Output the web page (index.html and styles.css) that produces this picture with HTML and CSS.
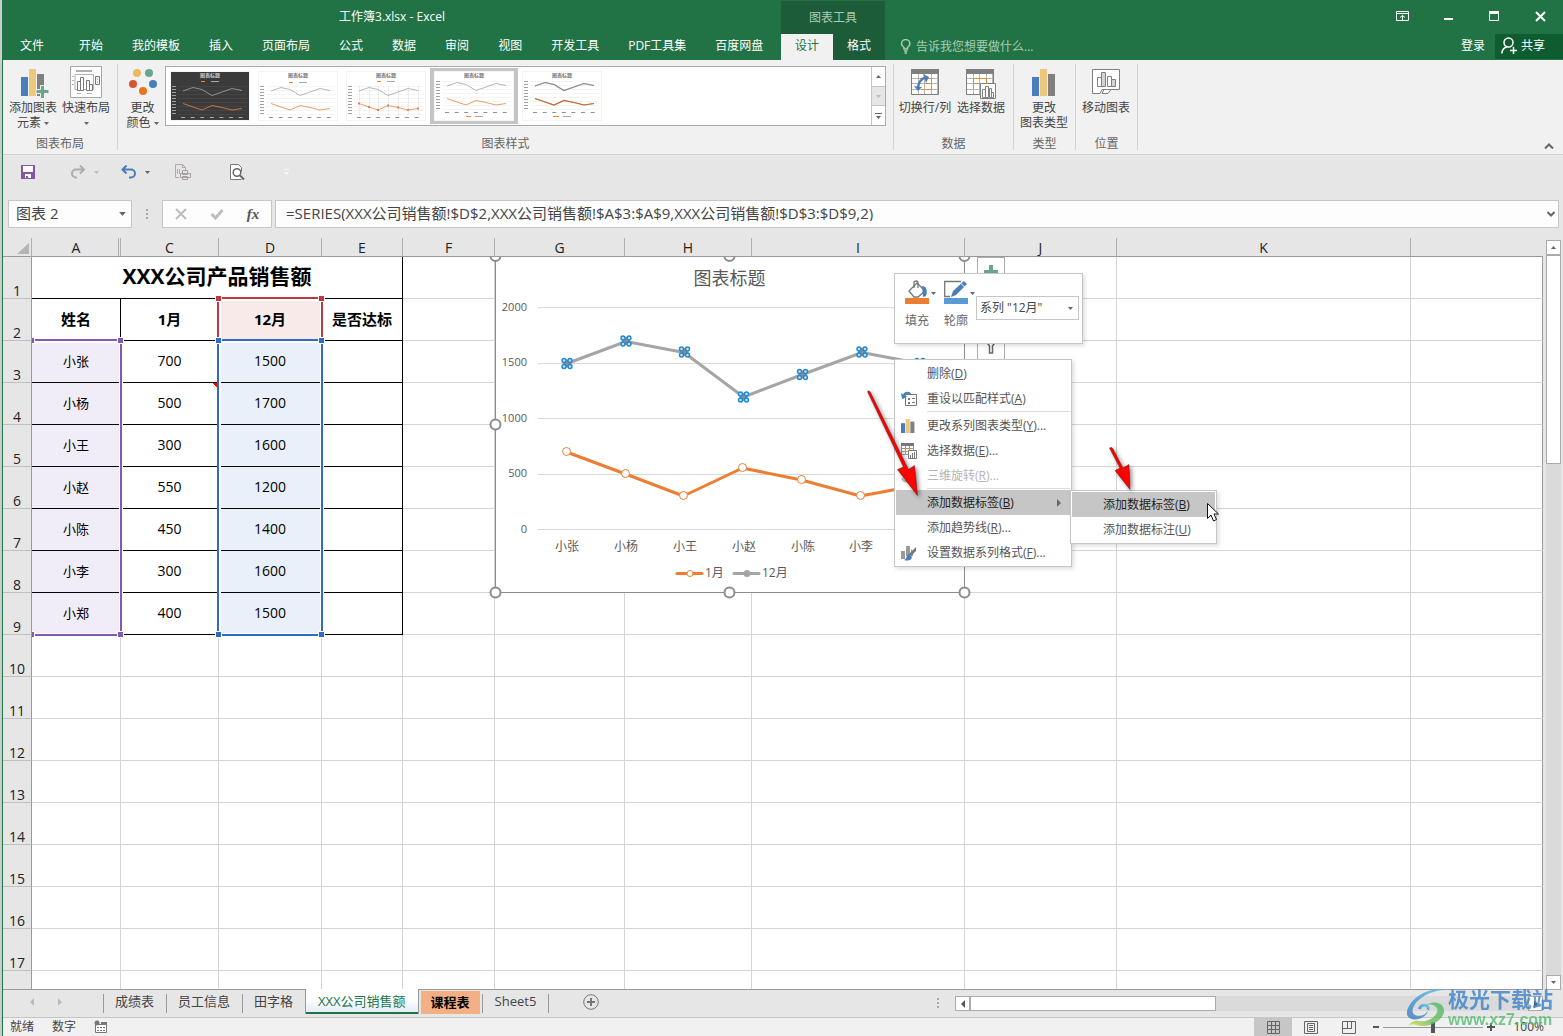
FILE: index.html
```html
<!DOCTYPE html>
<html lang="zh-CN">
<head>
<meta charset="utf-8">
<title>工作簿3.xlsx - Excel</title>
<meta name="viewport" content="width=device-width, initial-scale=1">
<link rel="stylesheet" href="styles.css">
</head>
<body>
<svg class="defs" aria-hidden="true">
  <defs>
    <symbol id="caret" viewBox="0 0 5 3"><path d="M0 0h5L2.500 3z" fill="currentColor"/></symbol>
    <symbol id="bars" viewBox="0 0 24 27"><path fill="#4a7ebb" d="M0 8h7v19H0z"/><path fill="#eec77e" d="M8 0h7v27H8z"/><path fill="#808080" d="M16 5h7v22h-7z"/></symbol>
    <symbol id="grid-table" viewBox="0 0 30 28"><path fill="#fff" stroke="#b5b5b5" d="M1.500 1.500h26v24h-26zM8.500 4v22M14.500 4v22M21.500 4v22M2 9.500h26M2 14.500h26M2 20.500h26"/><path fill="none" stroke="#7f7f7f" d="M1.500 4v21.500h27V4"/><path fill="#7f7f7f" d="M1 0h28v5H1z"/></symbol>
    <symbol id="plot" viewBox="0 0 78 48">
      <path fill="none" stroke="currentColor" stroke-opacity=".15" stroke-width=".5" d="M7 14.500h69M7 18.500h69M7 22.500h69M7 26.500h69M7 30.500h69M7 34.500h69M7 38.500h69M7 42.500h69"/>
      <path fill="none" stroke="currentColor" stroke-opacity=".7" stroke-dasharray="1 2" stroke-width="4" d="M3 14v29"/>
      <path fill="none" stroke="currentColor" stroke-opacity=".8" stroke-dasharray="4 5.600" stroke-width="1" d="M10 45.500h64"/>
      <path fill="none" stroke="#a5a5a5" stroke-width=".8" d="M12 19l10-3.500 9 2L41 23.500l10-3.500 10-3.500 10 2"/>
      <path fill="none" stroke="#e8853c" stroke-width=".8" d="M12 31.500l10 3.500 9 3 10-4.500 10 2 10 2.500 10-1.500"/>
    </symbol>
  </defs>
</svg>

<div class="window">
  <header class="titlebar">
    <div class="title-main">
      <h1 class="doc-title">工作簿3.xlsx - Excel</h1>
      <nav class="tabs" aria-label="功能区">
        <button class="tab tab-file">文件</button><button class="tab">开始</button><button class="tab">我的模板</button><button class="tab">插入</button><button class="tab">页面布局</button><button class="tab">公式</button><button class="tab">数据</button><button class="tab">审阅</button><button class="tab">视图</button><button class="tab">开发工具</button><button class="tab">PDF工具集</button><button class="tab">百度网盘</button>
      </nav>
    </div>
    <div class="context-tools">
      <div class="context-title">图表工具</div>
      <div class="context-tabs"><button class="ctab active">设计</button><button class="ctab">格式</button></div>
    </div>
    <div class="title-side">
      <div class="window-controls">
        <button aria-label="功能区显示选项"><svg width="13" height="11"><path fill="none" stroke="#fff" d="M.5.5h12v9H.5zM0 2.500h13M6.500 9V4.500M4 6.500l2.500-2 2.500 2"/></svg></button>
        <button aria-label="最小化"><svg width="11" height="11"><path fill="#fff" d="M1 7h9v2H1z"/></svg></button>
        <button aria-label="最大化"><svg width="11" height="11"><path fill="none" stroke="#fff" d="M.5.5h9v9h-9z"/><path fill="#fff" d="M0 0h10v3H0z"/></svg></button>
        <button aria-label="关闭"><svg width="11" height="11"><path stroke="#fff" stroke-width="2" d="M1 1l9 9M10 1l-9 9"/></svg></button>
      </div>
      <div class="account-row">
        <button class="tell-me"><svg width="12" height="15"><path fill="none" stroke="#a8cdb5" stroke-width="1.500" d="M4 10V8.500C2.500 7.500 1.500 6.500 1.500 4.800a4.200 4.200 0 018.400 0C9.900 6.500 9 7.500 7.500 8.500V10zM4 12h3.500M4.500 14h2.500"/></svg>告诉我您想要做什么...</button>
        <button class="login">登录</button>
        <button class="share"><svg width="16" height="17"><circle cx="7.500" cy="5.500" r="4.500" fill="none" stroke="#fff" stroke-width="1.500"/><path fill="none" stroke="#fff" stroke-width="1.500" d="M.8 16.500c.4-4 2.500-6 5.200-6.500M9 13.500h7M12.500 10v7"/></svg>共享</button>
      </div>
    </div>
  </header>

  <section class="ribbon" aria-label="设计">
    <div class="group group-layout">
      <div class="group-body">
        <button class="big"><svg width="24" height="30"><use href="#bars" width="24" height="27"/><path fill="#6ba58f" stroke="#f1f1f1" d="M19.500 16.500h4v4h4.500v4h-4.500v5h-4v-5H15v-4h4.500z"/></svg><span>添加图表</span><span>元素 <svg class="caret"><use href="#caret"/></svg></span></button>
        <button class="big"><svg class="tall" width="32" height="32"><path fill="#fff" stroke="#a6a6a6" d="M.5.5h31v31H.5z"/><path fill="#b0b0b0" d="M6 4h16v2H6z"/><path fill="none" stroke="#b0b0b0" d="M5 8.500h18.500v15H5zM2 10.500h2M2 14.500h2M2 18.500h2M7 27.500h4M17 27.500h5"/><path fill="#fff" stroke="#777" d="M7.500 15.500h3v9h-3zM10.500 11.500h3v13h-3zM16.500 14.500h3v10h-3zM19.500 18.500h3v6h-3zM25.500 10.500h4v8h-4zM27 13h1M27 16h1"/></svg><span>快速布局</span><span><svg class="caret"><use href="#caret"/></svg></span></button>
      </div>
      <div class="group-label">图表布局</div>
    </div>
    <div class="group group-styles">
      <div class="group-body">
        <button class="big"><svg width="28" height="28"><circle cx="8" cy="4" r="4" fill="#ecb864"/><circle cx="20" cy="4" r="4" fill="#6ba58f"/><circle cx="4" cy="15" r="4" fill="#d65532"/><circle cx="24" cy="15" r="4" fill="#4a7ebb"/><circle cx="14" cy="22" r="4" fill="#e5761c"/></svg><span>更改</span><span>颜色 <svg class="caret"><use href="#caret"/></svg></span></button>
        <div class="gallery">
          <button class="thumb" aria-label="样式 1"><svg class="dark" viewBox="0 0 78 48"><path fill="#3b3b3b" d="M0 0h78v48H0z"/><text x="39" y="5">图表标题</text><path stroke="#e8853c" d="M30 9.500h4"/><path stroke="#aaa" d="M40 9.500h8"/><use href="#plot"/></svg></button>
          <button class="thumb" aria-label="样式 2"><svg class="pale" viewBox="0 0 78 48"><text x="39" y="5">图表标题</text><path stroke="#e8853c" d="M30 10.500h4"/><path stroke="#aaa" d="M40 10.500h8"/><use href="#plot"/></svg></button>
          <button class="thumb" aria-label="样式 3"><svg class="pale" viewBox="0 0 78 48"><text x="39" y="5">图表标题</text><path stroke="#e8853c" d="M30 9.500h4"/><path stroke="#aaa" d="M40 9.500h8"/><path stroke="#eee" d="M12.500 14v29M22.500 14v29M31.500 14v29M41.500 14v29M51.500 14v29M61.500 14v29M71.500 14v29"/><use href="#plot"/><path fill="#e8853c" d="M11 30.500h2v2h-2zM21 34h2v2h-2zM30 37h2v2h-2zM40 32.500h2v2h-2zM50 34.500h2v2h-2zM60 37h2v2h-2zM70 35.500h2v2h-2z"/></svg></button>
          <button class="thumb selected" aria-label="样式 4"><svg class="pale" viewBox="0 0 78 48"><text x="39" y="5">图表标题</text><use href="#plot" y="-5"/><path stroke="#e8853c" d="M31 44.500h5"/><path stroke="#aaa" d="M40 44.500h8"/></svg></button>
          <button class="thumb" aria-label="样式 5"><svg class="pale" viewBox="0 0 78 48"><text x="39" y="5">图表标题</text><use href="#plot" y="-5"/><path fill="none" stroke="#8a8a8a" stroke-width="1.200" d="M12 14l10-3.500 9 2L41 18.500l10-3.500 10-3.500 10 2"/><path fill="none" stroke="#c06a35" stroke-width="1.200" d="M12 26.500l10 3.500 9 3 10-4.500 10 2 10 2.500 10-1.500"/><path stroke="#e8853c" d="M30 44.500h6"/><path stroke="#aaa" d="M40 44.500h8"/></svg></button>
          <div class="gallery-scroll">
            <button aria-label="上一行"><svg class="caret flip"><use href="#caret"/></svg></button>
            <button aria-label="下一行" disabled><svg class="caret"><use href="#caret"/></svg></button>
            <button aria-label="其他"><svg width="7" height="6"><path fill="#666" d="M0 0h7v1H0zM1 3h5L3.500 6z"/></svg></button>
          </div>
        </div>
      </div>
      <div class="group-label">图表样式</div>
    </div>
    <div class="group group-data">
      <div class="group-body">
        <button class="big"><svg width="30" height="28"><use href="#grid-table" width="30" height="28"/><path fill="none" stroke="#e8853c" d="M8.500 9.500h13v11H12M14.500 14.500h7"/><path fill="none" stroke="#4a7ebb" stroke-width="2.500" d="M8 20c0-7 4-11 9-12"/><path fill="#4a7ebb" d="M13 5l6 3-3 6zM4 17l4 5 4-4z"/></svg><span>切换行/列</span></button>
        <button class="big"><svg width="32" height="30"><use href="#grid-table" width="30" height="28"/><path fill="none" stroke="#e8853c" d="M8.500 20V9.500h13V14M8.500 14.500h6"/><path fill="#fff" stroke="#7f7f7f" d="M15.500 14.500h15v15h-15zM17.500 20.500h3v8h-3zM20.500 17.500h3v11h-3zM24.500 19.500h2v9h-2zM26.500 23.500h2v5h-2z"/></svg><span>选择数据</span></button>
      </div>
      <div class="group-label">数据</div>
    </div>
    <div class="group group-type">
      <div class="group-body">
        <button class="big"><svg width="24" height="27"><use href="#bars" width="24" height="27"/></svg><span>更改</span><span>图表类型</span></button>
      </div>
      <div class="group-label">类型</div>
    </div>
    <div class="group group-place">
      <div class="group-body">
        <button class="big"><svg width="29" height="27"><path fill="#fff" stroke="#7f7f7f" d="M.5.5h27v20H10l-2 4H.5zM10 24.500l2-4h7l-3 4z"/><path fill="#fff" stroke="#7f7f7f" d="M5.500 8.500h4v9h-4zM15.500 7.500h4v10h-4z"/><path fill="#d4d4d4" stroke="#7f7f7f" d="M9.500 3.500h4v14h-4zM19.500 10.500h4v7h-4z"/></svg><span>移动图表</span></button>
      </div>
      <div class="group-label">位置</div>
    </div>
    <button class="collapse" aria-label="折叠功能区"><svg width="10" height="6"><path fill="none" stroke="#666" stroke-width="2" d="M1 5.500l4-4 4 4"/></svg></button>
  </section>

  <div class="qat">
    <button aria-label="保存"><svg width="14" height="14"><path fill="#8655ab" d="M0 0h14v14H0z"/><path fill="#fff" d="M2 1h10v6H2zM4 9h6v4H4z"/><path fill="#8655ab" d="M5 11h2v2H5z"/></svg></button>
    <button class="q-redo" aria-label="恢复"><svg width="16" height="14"><path fill="none" stroke="#adadad" stroke-width="2" d="M13 4.500H6A4 4 0 006 12.500h1M10 .5l4 4-4 4"/></svg><svg class="caret faint"><use href="#caret"/></svg></button>
    <button class="q-undo" aria-label="撤消"><svg width="16" height="14"><path fill="none" stroke="#4a7ebb" stroke-width="2" d="M2 4.500h8a4 4 0 010 8H8M5.500.5l-4 4 4 4"/></svg><svg class="caret"><use href="#caret"/></svg></button>
    <button class="q-print" aria-label="快速打印"><svg width="17" height="17"><path fill="none" stroke="#b0a8ad" d="M4 13.500H.5V.5h7l3 3V6M7.500.5v3h3M2.500 5v5M4.500 5v5"/><path fill="#e6e6e6" stroke="#a6a0a4" d="M7.500 6.500h5v4h-5zM5.500 9.500h10v4h-10zM7.500 12.500h5v3h-5z"/></svg></button>
    <button class="q-find" aria-label="打印预览"><svg width="16" height="17"><path fill="#fff" stroke="#777" d="M11.500 15.500H.5V.5h8l3 3v4"/><circle cx="7" cy="8.500" r="3.800" fill="#fff" stroke="#666" stroke-width="1.500"/><path stroke="#666" stroke-width="2" d="M10 11.500l4 4"/></svg></button>
    <button class="q-more" aria-label="自定义快速访问工具栏"><svg width="5" height="6"><path fill="#f8f8f8" d="M0 0h5v1H0zM0 3h5L2.500 6z"/></svg></button>
  </div>

  <div class="formula-bar">
    <div class="name-box"><input aria-label="名称框" value="图表 2"><button aria-label="名称列表"><svg width="7" height="4"><use href="#caret"/></svg></button></div>
    <span class="dots"></span>
    <div class="fx-tools">
      <button aria-label="取消"><svg width="12" height="12"><path stroke="#bdbdbd" stroke-width="2" d="M1 1l10 10M11 1L1 11"/></svg></button>
      <button aria-label="输入"><svg width="14" height="12"><path fill="none" stroke="#bdbdbd" stroke-width="3" d="M1.500 6l4 4L12.500 2"/></svg></button>
      <button class="fx">fx</button>
    </div>
    <div class="formula"><input aria-label="编辑栏" value="=SERIES(XXX公司销售额!$D$2,XXX公司销售额!$A$3:$A$9,XXX公司销售额!$D$3:$D$9,2)"><button aria-label="展开编辑栏"><svg width="8" height="6"><path fill="none" stroke="#666" stroke-width="2" d="M.5 1l3.500 3.500L7.500 1"/></svg></button></div>
  </div>

  <main class="sheet-area">
    <div class="sheet">
      <table class="cells">
        <colgroup><col class="c-head"><col class="c-a"><col class="c-c"><col class="c-d"><col class="c-e"><col class="c-f"><col class="c-g"><col class="c-h"><col class="c-i"><col class="c-j"><col class="c-k"><col></colgroup>
        <thead><tr><th class="corner"><svg width="12" height="11"><path fill="#b4b4b4" d="M12 0v11H0z"/></svg></th><th class="before-hidden">A</th><th>C</th><th>D</th><th>E</th><th>F</th><th>G</th><th>H</th><th>I</th><th>J</th><th>K</th><th></th></tr></thead>
        <tbody class="data">
          <tr><th>1</th><td class="caption" colspan="4">XXX公司产品销售额</td><td></td><td></td><td></td><td></td><td></td><td></td><td></td></tr>
          <tr class="names"><th>2</th><td>姓名</td><td>1月</td><td class="red">12月</td><td>是否达标</td><td></td><td></td><td></td><td></td><td></td><td></td><td></td></tr>
          <tr><th>3</th><td class="violet">小张</td><td>700</td><td class="blue">1500</td><td></td><td></td><td></td><td></td><td></td><td></td><td></td><td></td></tr>
          <tr><th>4</th><td class="violet">小杨</td><td class="noted">500</td><td class="blue">1700</td><td></td><td></td><td></td><td></td><td></td><td></td><td></td><td></td></tr>
          <tr><th>5</th><td class="violet">小王</td><td>300</td><td class="blue">1600</td><td></td><td></td><td></td><td></td><td></td><td></td><td></td><td></td></tr>
          <tr><th>6</th><td class="violet">小赵</td><td>550</td><td class="blue">1200</td><td></td><td></td><td></td><td></td><td></td><td></td><td></td><td></td></tr>
          <tr><th>7</th><td class="violet">小陈</td><td>450</td><td class="blue">1400</td><td></td><td></td><td></td><td></td><td></td><td></td><td></td><td></td></tr>
          <tr><th>8</th><td class="violet">小李</td><td>300</td><td class="blue">1600</td><td></td><td></td><td></td><td></td><td></td><td></td><td></td><td></td></tr>
          <tr><th>9</th><td class="violet">小郑</td><td>400</td><td class="blue">1500</td><td></td><td></td><td></td><td></td><td></td><td></td><td></td><td></td></tr>
        </tbody>
        <tbody>
          <tr><th>10</th><td></td><td></td><td></td><td></td><td></td><td></td><td></td><td></td><td></td><td></td><td></td></tr>
          <tr><th>11</th><td></td><td></td><td></td><td></td><td></td><td></td><td></td><td></td><td></td><td></td><td></td></tr>
          <tr><th>12</th><td></td><td></td><td></td><td></td><td></td><td></td><td></td><td></td><td></td><td></td><td></td></tr>
          <tr><th>13</th><td></td><td></td><td></td><td></td><td></td><td></td><td></td><td></td><td></td><td></td><td></td></tr>
          <tr><th>14</th><td></td><td></td><td></td><td></td><td></td><td></td><td></td><td></td><td></td><td></td><td></td></tr>
          <tr><th>15</th><td></td><td></td><td></td><td></td><td></td><td></td><td></td><td></td><td></td><td></td><td></td></tr>
          <tr><th>16</th><td></td><td></td><td></td><td></td><td></td><td></td><td></td><td></td><td></td><td></td><td></td></tr>
          <tr><th>17</th><td></td><td></td><td></td><td></td><td></td><td></td><td></td><td></td><td></td><td></td><td></td></tr>
          <tr><th></th><td></td><td></td><td></td><td></td><td></td><td></td><td></td><td></td><td></td><td></td><td></td></tr>
        </tbody>
      </table>

      <!-- coloured frames round the ranges the chart series refers to -->
      <svg class="ranges" viewBox="32 257 300 384" width="300" height="384" aria-hidden="true">
        <g fill="none" stroke="#fff" stroke-width="4"><path d="M121 341H32M121 341V635H32M219 341H322V635H219zM219 341V299H322V341"/></g>
        <g fill="none" stroke-width="2"><path stroke="#7f5bb5" d="M32 340H121V635H32"/><path stroke="#c0373f" d="M218 340V298H322V340"/><path stroke="#2f6bc6" d="M218 340H322V635H218z"/></g>
        <g stroke="#fff"><path fill="#7f5bb5" d="M117.500 337.500h6v6h-6zM117.500 631.500h6v6h-6zM28.500 337.500h6v6h-6zM28.500 631.500h6v6h-6z"/><path fill="#c0373f" d="M215.500 295.500h6v6h-6zM318.500 295.500h6v6h-6z"/><path fill="#2f6bc6" d="M215.500 337.500h6v6h-6zM318.500 337.500h6v6h-6zM215.500 631.500h6v6h-6zM318.500 631.500h6v6h-6z"/></g>
      </svg>

      <svg class="chart" viewBox="488 257 484 343" width="484" height="343" role="img" aria-label="图表标题">
        <path fill="#fff" stroke="#8c8c8c" d="M495.500 250.500h469v342h-469z"/>
        <text class="chart-title" x="729.500" y="285">图表标题</text>
        <path fill="none" stroke="#d9d9d9" d="M538 307.500h411M538 363.500h411M538 418.500h411M538 474.500h411M538 529.500h411"/>
        <g class="y-axis"><text x="527" y="311">2000</text><text x="527" y="366">1500</text><text x="527" y="422">1000</text><text x="527" y="477">500</text><text x="527" y="533">0</text></g>
        <g class="x-axis"><text x="567" y="551">小张</text><text x="626" y="551">小杨</text><text x="685" y="551">小王</text><text x="744" y="551">小赵</text><text x="803" y="551">小陈</text><text x="861" y="551">小李</text></g>
        <path fill="none" stroke="#a5a5a5" stroke-width="3" stroke-linejoin="round" d="M567 363.500L626 341.500 684 352.500 743.500 397 802.500 374.500 862 352.500 920 363.500"/>
        <path fill="none" stroke="#ed7d31" stroke-width="3" stroke-linejoin="round" d="M566.500 452L625.500 474 683.500 496 742.500 468 801.500 480 860.500 496 919.500 485"/>
        <g fill="#fff" stroke="#ed7d31"><circle cx="566.500" cy="451.500" r="4"/><circle cx="625.500" cy="473.500" r="4"/><circle cx="683.500" cy="495.500" r="4"/><circle cx="742.500" cy="467.500" r="4"/><circle cx="801.500" cy="479.500" r="4"/><circle cx="860.500" cy="495.500" r="4"/></g>
        <defs><g id="pt"><circle r="4" fill="#8c8c8c"/><g fill="#bfe0f7" stroke="#1c86d1" stroke-width="1.400"><circle cx="-3" cy="-3" r="2"/><circle cx="3" cy="-3" r="2"/><circle cx="-3" cy="3" r="2"/><circle cx="3" cy="3" r="2"/></g></g></defs>
        <use href="#pt" x="567" y="363.500"/><use href="#pt" x="626" y="341"/><use href="#pt" x="684.500" y="352"/><use href="#pt" x="743.500" y="397"/><use href="#pt" x="802.500" y="374.500"/><use href="#pt" x="862" y="352"/><use href="#pt" x="920" y="363.500"/>
        <path stroke="#ed7d31" stroke-width="3" stroke-linecap="round" d="M677 573.500h25"/><circle cx="690" cy="573.500" r="3" fill="#fff" stroke="#ed7d31"/><text x="705" y="577">1月</text>
        <path stroke="#a5a5a5" stroke-width="3" stroke-linecap="round" d="M734 573.500h25"/><circle cx="747" cy="573.500" r="3.500" fill="#a5a5a5"/><text x="762" y="577">12月</text>
        <g fill="#fff" stroke="#8c8c8c" stroke-width="2"><circle cx="495.500" cy="256" r="5"/><circle cx="729.500" cy="256" r="5"/><circle cx="964.500" cy="256" r="5"/><circle cx="495.500" cy="424.500" r="5"/><circle cx="495.500" cy="592.500" r="5"/><circle cx="729.500" cy="592.500" r="5"/><circle cx="964.500" cy="592.500" r="5"/></g>
      </svg>

      <div class="chart-side">
        <button aria-label="图表元素"><svg width="14" height="14"><path fill="#6ba58f" d="M5 0h4v5h5v4H9v5H5V9H0V5h5z"/></svg></button>
        <button aria-label="图表筛选器"><svg width="12" height="14"><path fill="#fff" stroke="#666" stroke-width="1.500" d="M1 1h10L7.500 6v7h-3V6z"/></svg></button>
      </div>

      <div class="mini-bar">
        <button class="mini"><svg width="27" height="26"><path fill="#fff" stroke="#777" stroke-width="1.300" d="M4 11l8-8 8 8-7 6H9z"/><path fill="none" stroke="#777" stroke-width="1.300" d="M9 8V2.500c0-2 4-2 4 0V8"/><path fill="#4a7ebb" d="M17 6c4 0 6 4 4 10l-3 1z"/><path fill="#ed7d31" d="M0 18h24v6H0z"/></svg><svg class="caret"><use href="#caret"/></svg><span>填充</span></button>
        <button class="mini"><svg width="27" height="26"><path fill="#fff" stroke="#777" stroke-width="1.300" d="M17 1.500H.7v15H6"/><path fill="#4a7ebb" d="M7 17l2-6L20 1l3 3-11 11z"/><path stroke="#fff" d="M17 3.500l3.500 3.500"/><path fill="#5b9bd5" d="M0 18h24v6H0z"/></svg><svg class="caret"><use href="#caret"/></svg><span>轮廓</span></button>
        <div class="series"><select aria-label="图表元素"><option>系列 "12月"</option></select><svg class="caret"><use href="#caret"/></svg></div>
      </div>

      <ul class="menu">
        <li><button><i></i>删除(<u>D</u>)</button></li>
        <li><button><i><svg width="16" height="16"><path fill="#fff" stroke="#777" d="M4.500 3.500h11v11h-11z"/><path stroke="#777" stroke-width="2" d="M7 8h2M7 12h2"/><path stroke="#777" d="M11 7.500h3M11 11.500h3"/><path fill="none" stroke="#4a7ebb" stroke-width="2" d="M3 7C2 2 6 .5 9.500 3"/><path fill="#4a7ebb" d="M0 2l1 6 5-2z"/></svg></i>重设以匹配样式(<u>A</u>)</button></li>
        <li class="sep"></li>
        <li><button><i><svg width="14" height="14" viewBox="0 0 24 27" preserveAspectRatio="none"><use href="#bars"/></svg></i>更改系列图表类型(<u>Y</u>)...</button></li>
        <li><button><i><svg width="16" height="16"><path fill="#fff" stroke="#999" d="M.5.5h12v11H.5zM4.500 3v9M8.500 3v9M1 5.500h12M1 8.500h12"/><path fill="#777" d="M0 0h13v3H0z"/><path fill="none" stroke="#e8853c" d="M4.500 9V5.500h5"/><path fill="#fff" stroke="#777" d="M7.500 7.500h8v8h-8z"/><path stroke="#777" d="M9.500 12v3M11.500 10v5M13.500 9v6"/></svg></i>选择数据(<u>E</u>)...</button></li>
        <li><button disabled><i><svg width="14" height="14"><path fill="none" stroke="#bbb" stroke-width="2" d="M1 5a6 6 0 0111 0M12 9A6 6 0 011 9M5 5h4v4H5z"/></svg></i>三维旋转(<u>R</u>)...</button></li>
        <li class="sep"></li>
        <li><button class="on"><i></i>添加数据标签(<u>B</u>)<svg class="sub-arrow" width="4" height="8"><path fill="#666" d="M0 0l4 4-4 4z"/></svg></button></li>
        <li><button><i></i>添加趋势线(<u>R</u>)...</button></li>
        <li><button><i><svg width="16" height="16"><path fill="#999" d="M0 6h4v8H0zM5 1h4v10H5zM10 4l2 2v5h-2z"/><path fill="#777" d="M15 2v4l-5 5-2-2z"/><path fill="#4a7ebb" d="M8 9l3 3c-1 4-4 4-8 3 3-1 2-5 5-6z"/></svg></i>设置数据系列格式(<u>F</u>)...</button></li>
      </ul>
      <ul class="menu submenu">
        <li><button class="on"><i></i>添加数据标签(<u>B</u>)</button></li>
        <li><button><i></i>添加数据标注(<u>U</u>)</button></li>
      </ul>

      <svg class="pointers" viewBox="860 380 370 150" width="370" height="150" aria-hidden="true">
        <g class="arrows" fill="#fe0000" stroke="#6b1010" stroke-width=".5"><path d="M867.500 391.500c1-1 2.500-.5 3 1l38 77 6-4 3 30-20-26 6-2.500z"/><path d="M1109.500 448c1-1 3-.5 3.500 1l10 19 6-3.500 1 25-15-19 5-2.500z"/></g>
        <path fill="#fff" stroke="#111" d="M1207.500 503.500v15l3.500-3.500 2.500 6 3-1.500-2.500-5.500h4.500z"/>
      </svg>
    </div>
    <div class="vscroll">
      <button aria-label="向上滚动"><svg class="caret flip"><use href="#caret"/></svg></button>
      <div class="vtrack"><div class="vthumb"></div></div>
      <button aria-label="向下滚动"><svg class="caret"><use href="#caret"/></svg></button>
    </div>
  </main>

  <footer>
    <div class="sheet-tabs">
      <div class="tab-nav"><button aria-label="上一张"><svg width="4" height="8"><path fill="#bbb" d="M4 0v8L0 4z"/></svg></button><button aria-label="下一张"><svg width="4" height="8"><path fill="#bbb" d="M0 0l4 4-4 4z"/></svg></button></div>
      <button class="stab">成绩表</button><button class="stab">员工信息</button><button class="stab">田字格</button><button class="stab current">XXX公司销售额</button><button class="stab orange">课程表</button><button class="stab last">Sheet5</button>
      <button class="add" aria-label="新工作表"><svg width="16" height="16"><circle cx="8" cy="8" r="7.300" fill="none" stroke="#777"/><path stroke="#777" stroke-width="2" d="M4 8h8M8 4v8"/></svg></button>
      <span class="dots"></span>
      <div class="hscroll">
        <button aria-label="向左滚动"><svg width="4" height="8"><path fill="#555" d="M4 0v8L0 4z"/></svg></button>
        <div class="htrack"><div class="hthumb"></div></div>
        <button aria-label="向右滚动"><svg width="4" height="8"><path fill="#555" d="M0 0l4 4-4 4z"/></svg></button>
      </div>
    </div>
    <div class="status">
      <span>就绪</span><span>数字</span>
      <svg width="14" height="14"><path fill="#fff" stroke="#777" d="M1.500 4.500h11v8h-11z"/><path fill="#777" d="M7 2h6v3H7z"/><circle cx="3" cy="3" r="2.500" fill="#777"/><path stroke="#777" stroke-dasharray="2 1" d="M3 7.500h9M3 10.500h9"/></svg>
      <div class="views">
        <button class="on" aria-label="普通"><svg width="13" height="13"><path fill="none" stroke="#666" d="M.5.5h12v12H.5zM4.500 0v13M8.500 0v13M0 4.500h13M0 8.500h13"/></svg></button>
        <button aria-label="页面布局"><svg width="14" height="13"><path fill="none" stroke="#666" d="M.5.5h13v12H.5zM3.500 2.500h7v8h-7zM5 4.500h4M5 6.500h4M5 8.500h4"/></svg></button>
        <button aria-label="分页预览"><svg width="14" height="13"><path fill="none" stroke="#666" d="M.5.5h13v12H.5zM5.500 0v7M9.500 0v7M0 7.500h10"/></svg></button>
      </div>
      <div class="zoom-group">
        <button aria-label="缩小"><svg width="6" height="8"><path fill="#555" d="M0 3h6v2H0z"/></svg></button>
        <input class="zoom" type="range" min="0" max="100" value="50" aria-label="缩放">
        <button aria-label="放大"><svg width="8" height="8"><path fill="#555" d="M0 3h8v2H0zM3 0h2v8H3z"/></svg></button>
      </div>
      <button class="percent">100%</button>
    </div>
  </footer>

  <div class="watermark">
    <svg width="44" height="40" viewBox="0 0 44 42"><defs><linearGradient id="wa" x1="1" y1="0" x2="0" y2="1"><stop offset="0" stop-color="#4fc3ea"/><stop offset="1" stop-color="#3d78bd"/></linearGradient><linearGradient id="wb" x1="1" y1="0" x2="0" y2="1"><stop offset="0" stop-color="#4bb86b"/><stop offset=".6" stop-color="#6cc05d"/><stop offset="1" stop-color="#e6e050"/></linearGradient></defs><path fill="url(#wa)" d="M43 2C30-1 14 5 6 16-2 27 3 33 10 33c8 0 14-5 14-10-2 5-7 7-12 6-6-2-5-8 0-14C19 7 31 2 43 2z"/><path fill="url(#wb)" d="M22 18c7-5 19-3 19 6 0 9-15 19-28 15-3-1-6-1-10 1 5-7 9-6 15-5 7 0 15-5 16-11 0-5-6-8-12-6z"/><path fill="none" stroke="url(#wa)" stroke-width="3" d="M24 23c2-6-7-7-9-1"/></svg>
    <div><strong>极光下载站</strong><span>www.xz7.com</span></div>
  </div>
</div>
</body>
</html>
```
FILE: styles.css
```css
* { box-sizing: border-box; }
body {
  margin: 0;
  background: #c9cdcb;
  color: #444;
  font: 12px/16px "Open Sans", "Noto Sans CJK SC", sans-serif;
}
button, input, select { font: inherit; color: inherit; margin: 0; padding: 0; border: 0; border-radius: 0; background: none; }
button { display: flex; align-items: center; justify-content: center; white-space: nowrap; }
svg { flex: none; display: block; }
.defs { position: absolute; width: 0; height: 0; }
.caret { display: inline-block; width: 5px; height: 3px; color: #666; vertical-align: middle; }
.flip { transform: rotate(180deg); }
.faint { color: #bbb; }
.window {
  position: relative;
  display: flex;
  flex-direction: column;
  height: 100vh;
  margin-left: 2px;
  border-left: 1px solid #217346;
  background: #e6e6e6;
  overflow: hidden;
}

/* title bar */
.titlebar { display: flex; flex: none; height: 60px; background: #217346; color: #fff; }
.title-main { display: flex; flex-direction: column; width: 778px; }
.doc-title { flex: none; height: 34px; margin: 0; font-size: 12px; font-weight: 400; line-height: 34px; text-align: center; }
.tabs { display: flex; gap: 1px; height: 24px; }
.tab { padding: 0 14px; }
.tab-file { padding: 0 20px 0 17px; }
.context-tools { display: flex; flex-direction: column; width: 104px; margin-top: 1px; background: #1c5c39; }
.context-title { height: 33px; line-height: 33px; text-align: center; color: #a8cdb5; }
.context-tabs { display: flex; flex: 1; }
.ctab { flex: 1; padding-bottom: 2px; }
.ctab.active { background: #f1f1f1; color: #217346; }
.title-side { display: flex; flex: 1; flex-direction: column; }
.window-controls { display: flex; justify-content: flex-end; height: 33px; margin-bottom: 1px; }
.window-controls button { width: 46px; }
.account-row { display: flex; height: 25px; }
.tell-me { gap: 4px; margin-right: auto; padding-left: 15px; color: #a8cdb5; }
.login { padding: 0 10px 2px; }
.share { gap: 4px; width: 68px; padding: 0 12px 2px 0; background: #0f5c30; }

/* ribbon */
.ribbon { display: flex; flex: none; height: 95px; padding-top: 4px; background: #f1f1f1; border-bottom: 1px solid #d2d2d2; }
.group { display: flex; flex-direction: column; height: 86px; border-right: 1px solid #d2d2d2; }
.group-layout { width: 115px; }
.group-styles { width: 776px; }
.group-data { width: 120px; }
.group-type, .group-place { width: 62px; }
.group-body { display: flex; justify-content: center; height: 72px; padding: 2px 1px 0 0; }
.group-label { height: 14px; line-height: 16px; text-align: center; color: #666; }
.big { display: flex; flex-direction: column; justify-content: flex-start; width: 53px; line-height: 15px; }
.big > svg { height: 34px; padding-top: 3px; overflow: visible; }
.big > .tall { padding-top: 0; }
.big span { height: 15px; }
.group-data .big { width: 56px; }
.group-styles .big { width: 45px; }
.group-styles .group-body { justify-content: flex-start; padding-left: 2px; }
.gallery { display: flex; width: 721px; height: 60px; border: 1px solid #ababab; background: #fff; }
.thumb { width: 88px; padding: 1px; border: 4px solid transparent; height: 56px; margin-top: 1px; }
.thumb svg { width: 78px; height: 48px; outline: 1px solid #f4f4f4; }
.thumb text { font-size: 5px; font-weight: 700; text-anchor: middle; fill: currentColor; }
.thumb .dark { color: #ccc; }
.thumb .pale { color: #777; }
.thumb.selected { border-color: #c5c5c5; }
.gallery-scroll { display: flex; flex-direction: column; width: 14px; margin-left: auto; border-left: 1px solid #c6c6c6; }
.gallery-scroll button { flex: 1; border-bottom: 1px solid #c6c6c6; }
.gallery-scroll button:last-child { border-bottom: 0; }
.gallery-scroll button:disabled { background: #e6e6e6; }
.gallery-scroll button:disabled .caret { color: #bbb; }
.collapse { align-self: flex-end; margin: 0 9px 5px auto; }

/* quick access */
.qat { display: flex; flex: none; align-items: center; height: 34px; padding-left: 18px; }
.qat button { gap: 8px; }
.q-redo { margin-left: 35px; }
.q-undo { margin-left: 22px; }
.q-print { margin-left: 25px; }
.q-find { margin-left: 38px; }
.q-more { margin-left: 38px; }

/* formula bar */
.formula-bar { display: flex; flex: none; height: 49px; padding: 11px 4px 10px 5px; font-size: 15px; }
.name-box, .fx-tools, .formula { display: flex; border: 1px solid #c6c6c6; background: #fdfdfd; }
.name-box { width: 124px; padding: 0 5px 0 7px; }
.name-box input, .formula input { flex: 1; min-width: 0; padding-bottom: 2px; }
.name-box button { color: #666; }
.dots { flex: none; align-self: center; width: 2px; height: 10px; background: repeating-linear-gradient(#aaa 0 2px, transparent 2px 4px); }
.formula-bar .dots { margin: 0 14px; }
.fx-tools { width: 110px; }
.fx-tools button { flex: 1; }
.fx-tools .fx { font: italic 700 15px "Liberation Serif", serif; color: #555; }
.formula { flex: 1; margin-left: 3px; padding: 0 3px 0 10px; }

/* sheet */
.sheet-area { display: flex; flex: 1; min-height: 0; }
.sheet { position: relative; flex: 1; min-width: 0; overflow: hidden; border-bottom: 1px solid #999; }
.cells { width: 100%; table-layout: fixed; border-spacing: 0; background: #fff; color: #000; font-size: 14px; }
.c-head { width: 29px; } .c-a { width: 89px; } .c-c { width: 98px; } .c-d { width: 103px; }
.c-e { width: 81px; } .c-f { width: 92px; } .c-g { width: 130px; } .c-h { width: 127px; }
.c-i { width: 213px; } .c-j { width: 152px; } .c-k { width: 294px; }
.cells th, .cells td { padding: 0; border: 0 solid #d4d4d4; border-width: 0 1px 1px 0; text-align: center; }
.cells td { padding-bottom: 2px; }
.cells th { background: #e6e6e6; font-weight: 400; color: #222; }
.cells thead th { height: 19px; padding-top: 2px; border-right-color: #b0b0b0; border-bottom-color: #999; line-height: 16px; }
.cells thead th:last-child { border-right: 0; }
.cells thead .before-hidden { background: linear-gradient(#b0b0b0, #b0b0b0) right 1px top / 1px 100% no-repeat #e6e6e6; }
.corner svg { margin: 0 2px 0 auto; }
.cells tbody tr { height: 42px; }
.cells tbody th { vertical-align: bottom; border-right-color: #999; border-bottom-color: #c0c0c0; line-height: 15px; }
.cells td:last-child { border-right-color: #999; }
.data td:nth-child(-n+5) { border-color: #000; }
.data tr:first-child td:nth-child(n+3) { border-color: #d4d4d4; }
.data tr:first-child td:last-child { border-right-color: #999; }
.cells .caption { padding-bottom: 4px; font-size: 21px; font-weight: 700; line-height: 28px; }
.names td { font-size: 15px; font-weight: 700; }
.red { background: #f9eaea; }
.blue { background: #e9f0fa; }
.violet { background: #f1edf8; font-size: 13px; }
.noted { background: linear-gradient(225deg, #f00 4px, transparent 4px); }

/* objects floating over the cells */
.ranges, .chart, .chart-side, .mini-bar, .menu, .pointers { position: absolute; }
.ranges { left: 29px; top: 19px; }
.chart { left: 485px; top: 19px; font-size: 12px; fill: #595959; }
.chart-title { font-size: 18px; text-anchor: middle; }
.y-axis { font-size: 11px; text-anchor: end; }
.x-axis { text-anchor: middle; }
.chart-side { left: 974px; top: 19px; display: flex; flex-direction: column; justify-content: space-between; width: 28px; height: 103px; }
.chart-side button { align-items: flex-start; height: 28px; padding-top: 7px; border: 1px solid #ababab; background: #fff; }
.mini-bar { left: 891px; top: 35px; display: flex; width: 189px; height: 71px; padding: 6px 3px 0 10px; border: 1px solid #c6c6c6; background: #fff; box-shadow: 2px 2px 4px #0002; color: #666; }
.mini { flex-wrap: wrap; align-content: flex-start; justify-content: flex-start; width: 39px; }
.mini .caret { margin-left: -1px; }
.mini span { width: 24px; margin-top: 7px; }
.series { display: flex; align-items: center; width: 103px; height: 24px; margin: 16px 0 0 auto; padding: 0 5px 0 3px; border: 1px solid #c6c6c6; background: #fff; color: #444; }
.mini + .mini { width: 32px; margin-right: -7px; }
.series select { flex: 1; min-width: 0; appearance: none; outline: 0; }
.menu { left: 891px; top: 121px; width: 178px; margin: 0; padding: 1px; list-style: none; border: 1px solid #c6c6c6; background: #fff; box-shadow: 2px 2px 4px #0002; color: #555; }
.menu button { justify-content: flex-start; width: 100%; height: 25px; }
.menu i { display: flex; width: 31px; padding-left: 5px; }
.menu .on { background: #c6c6c6; color: #222; }
.menu button:disabled { color: #b5b5b5; }
.sep { height: 2px; margin-left: 31px; border-top: 1px solid #dcdcdc; }
.sub-arrow { margin: 0 9px 0 auto; }
.submenu { left: 1067px; top: 252px; width: 147px; }
.pointers { left: 857px; top: 142px; pointer-events: none; }
.arrows { filter: drop-shadow(2px 2px 2px #0007); }

.vscroll { display: flex; flex: none; flex-direction: column; width: 15px; margin: 2px 2px 0 3px; }
.vscroll button { height: 15px; border: 1px solid #ababab; background: #fff; }
.vtrack { flex: 1; background: #dadada; }
.vthumb { height: 29%; border: 1px solid #ababab; background: #fff; }

/* footer */
footer { flex: none; }
.sheet-tabs { display: flex; height: 27px; padding-bottom: 3px; font-size: 13px; }
.tab-nav { display: flex; gap: 24px; width: 100px; padding-left: 27px; }
.stab { position: relative; padding: 0 12px 2px; }
.stab::before, .stab.last::after { position: absolute; left: 0; top: 4px; width: 1px; height: 19px; background: #999; content: ""; }
.stab.last { padding: 0 13px 2px; }
.stab.last::after { left: auto; right: 0; }
.stab.current { margin-top: -1px; border: solid #999; border-width: 0 1px; background: linear-gradient(#fff 40%, #dfe9f6); box-shadow: inset 0 -2px #217346; color: #217346; }
.stab.current::before, .stab.orange::before { display: none; }
.stab.orange { margin: 1px 2px 0; padding: 0 10px 2px; background: #f4b084; color: #000; font-weight: 700; }
.add { margin: 0 auto 0 34px; }
.sheet-tabs > .dots { margin-top: 2px; }
.hscroll { display: flex; align-self: center; flex: 0 1 588px; height: 15px; margin: 3px 20px 0 16px; }
.hscroll button { width: 15px; border: 1px solid #ababab; background: #fff; }
.htrack { flex: 1; background: #dadada; }
.hthumb { width: 44%; height: 15px; border: 1px solid #ababab; background: #fff; }
.status { display: flex; align-items: center; gap: 18px; height: 19px; padding: 0 19px 0 7px; border-top: 1px solid #c6c6c6; background: #f1f1f1; }
.views { display: flex; align-self: stretch; margin-left: auto; }
.views button { width: 38px; }
.views .on { background: #c6c6c6; }
.zoom-group { display: flex; align-items: center; gap: 4px; margin-left: -13px; }
.zoom { width: 100px; height: 14px; appearance: none; background: linear-gradient(#999, #999) center / 100% 1px no-repeat; }
.zoom::-webkit-slider-thumb { appearance: none; width: 4px; height: 11px; background: #555; }

.watermark { position: absolute; right: 10px; bottom: 6px; display: flex; align-items: flex-start; opacity: .8; pointer-events: none; }
.watermark div { display: flex; flex-direction: column; }
.watermark strong { font-size: 21px; line-height: 22px; color: #3f82c8; }
.watermark span { font: 700 16px/20px "Liberation Sans", sans-serif; color: #55bd74; }
```
